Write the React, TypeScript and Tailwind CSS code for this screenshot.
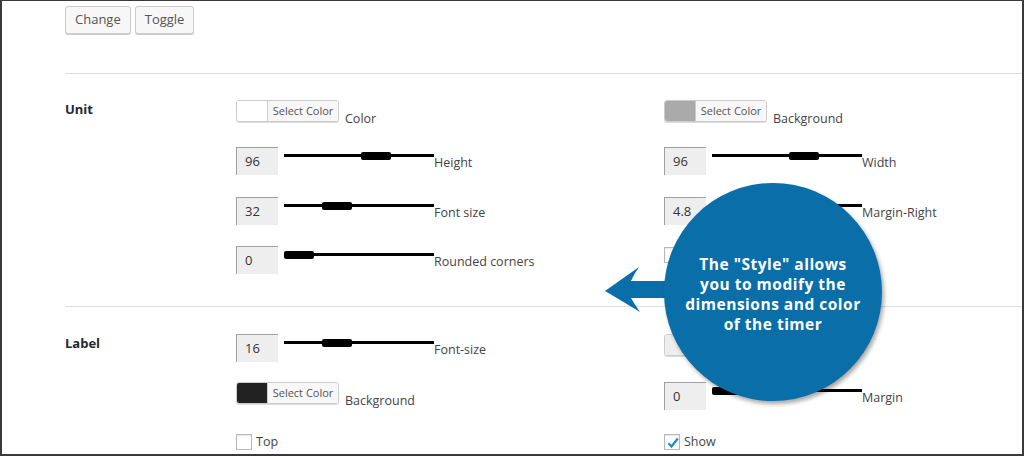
import React from "react";

const font = { fontFamily: '"Open Sans", "Noto Sans", sans-serif' };

function Btn({ children }: { children: React.ReactNode }) {
  return (
    <div className="h-[28px] px-[9px] flex items-center rounded-[3px] border border-[#cccccc] bg-[#f7f7f7] text-[13px] text-[#555] shadow-[0_1px_0_#ccc]">
      {children}
    </div>
  );
}

function ColorPicker({ color, label }: { color: string; label: string }) {
  return (
    <div className="flex items-start">
      <div className="flex h-[22px] rounded-[3px] border border-[#cccccc] overflow-hidden shadow-[0_1px_0_#ddd]">
        <div className="w-[30px] h-full" style={{ background: color }} />
        <div className="w-[71px] h-full bg-[#f7f7f7] border-l border-[#cccccc] flex items-center justify-center text-[11px] text-[#555]">
          Select Color
        </div>
      </div>
      <div className="ml-[6px] mt-[10px] text-[12.5px] text-[#444] leading-[18px]">{label}</div>
    </div>
  );
}

function NumInput({ value }: { value: string }) {
  return (
    <div className="w-[42px] h-[28px] bg-[#eeeeee] border-t border-l border-[#a0a0a0] flex items-center pl-[8px] text-[13px] text-[#333]">
      {value}
    </div>
  );
}

function SliderRow({ value, pos, label }: { value: string; pos: number; label: string }) {
  return (
    <div className="flex items-center">
      <NumInput value={value} />
      <div className="relative ml-[6px] w-[150px] h-[28px]">
        <div className="absolute left-0 right-0 top-[7px] h-[3px] bg-black" />
        <div className="absolute top-[5px] w-[30px] h-[8px] bg-black rounded-[2px]" style={{ left: pos }} />
      </div>
      <div className="text-[12.5px] text-[#444] mt-[4px]">{label}</div>
    </div>
  );
}

function Check({ checked, label }: { checked?: boolean; label?: string }) {
  return (
    <div className="flex items-center">
      <div className="relative w-[16px] h-[16px] border border-[#b4b9be] bg-white shadow-[inset_0_1px_2px_rgba(0,0,0,0.1)]">
        {checked && (
          <svg viewBox="0 0 16 16" className="absolute left-0 top-0 w-[16px] h-[16px]">
            <path d="M3.5 8.2 L6.5 11.5 L12.8 3.5" fill="none" stroke="#1e8cbe" strokeWidth="2.2" />
          </svg>
        )}
      </div>
      {label && <div className="ml-[4px] text-[12.5px] text-[#444]">{label}</div>}
    </div>
  );
}

export default function App() {
  return (
    <div
      className="relative w-[1024px] h-[456px] bg-white border-t border-l-2 border-r-2 border-b-2 border-[#3a3a3a] overflow-hidden"
      style={font}
    >
      <div className="pl-[63px] pt-[5px] flex gap-[4px]">
        <Btn>Change</Btn>
        <Btn>Toggle</Btn>
      </div>

      <div className="ml-[63px] mt-[39px] h-px bg-[#dddddd]" />

      {/* Unit section */}
      <div className="pl-[63px] pt-[26px] flex">
        <div className="w-[171px] text-[13px] font-bold text-[#23282d]">Unit</div>
        <div className="w-[428px] flex flex-col">
          <div className="h-[47px]">
            <ColorPicker color="#ffffff" label="Color" />
          </div>
          <div className="h-[50px]">
            <SliderRow value="96" pos={77} label="Height" />
          </div>
          <div className="h-[49px]">
            <SliderRow value="32" pos={38} label="Font size" />
          </div>
          <div className="h-[28px]">
            <SliderRow value="0" pos={0} label="Rounded corners" />
          </div>
        </div>
        <div className="flex flex-col">
          <div className="h-[47px]">
            <ColorPicker color="#aaaaaa" label="Background" />
          </div>
          <div className="h-[50px]">
            <SliderRow value="96" pos={77} label="Width" />
          </div>
          <div className="h-[49px]">
            <SliderRow value="4.8" pos={60} label="Margin-Right" />
          </div>
          <div className="h-[28px] pt-[1px]">
            <Check />
          </div>
        </div>
      </div>

      <div className="ml-[63px] mt-[32px] h-px bg-[#dddddd]" />

      {/* Label section */}
      <div className="pl-[63px] pt-[27px] flex">
        <div className="w-[171px] text-[13px] font-bold text-[#23282d]">Label</div>
        <div className="w-[428px] flex flex-col">
          <div className="h-[48px]">
            <SliderRow value="16" pos={38} label="Font-size" />
          </div>
          <div className="h-[51px]">
            <ColorPicker color="#222222" label="Background" />
          </div>
          <div className="h-[16px]">
            <Check label="Top" />
          </div>
        </div>
        <div className="flex flex-col">
          <div className="h-[48px]">
            <ColorPicker color="#eeeeee" label="" />
          </div>
          <div className="h-[51px]">
            <SliderRow value="0" pos={0} label="Margin" />
          </div>
          <div className="h-[16px]">
            <Check checked label="Show" />
          </div>
        </div>
      </div>

      {/* Callout overlay */}
      <svg className="absolute left-[600px] top-[262px]" width="90" height="52" viewBox="600 262 90 52">
        <path
          d="M603 290 Q620 278 637 266 Q632 273 629 280 L690 280 L690 297 L629 297 Q633 304 638 311 Q620 300 603 290 Z"
          fill="#0a6ea8"
        />
      </svg>
      <div className="absolute left-[662px] top-[182px] w-[218px] h-[218px] rounded-full bg-[#0a6ea8] shadow-[2px_3px_4px_rgba(0,0,0,0.35)] flex items-center justify-center">
        <div className="text-white font-bold text-[15.5px] leading-[20px] text-center tracking-[0.5px] mt-[4px]">
          The "Style" allows
          <br />
          you to modify the
          <br />
          dimensions and color
          <br />
          of the timer
        </div>
      </div>
    </div>
  );
}
